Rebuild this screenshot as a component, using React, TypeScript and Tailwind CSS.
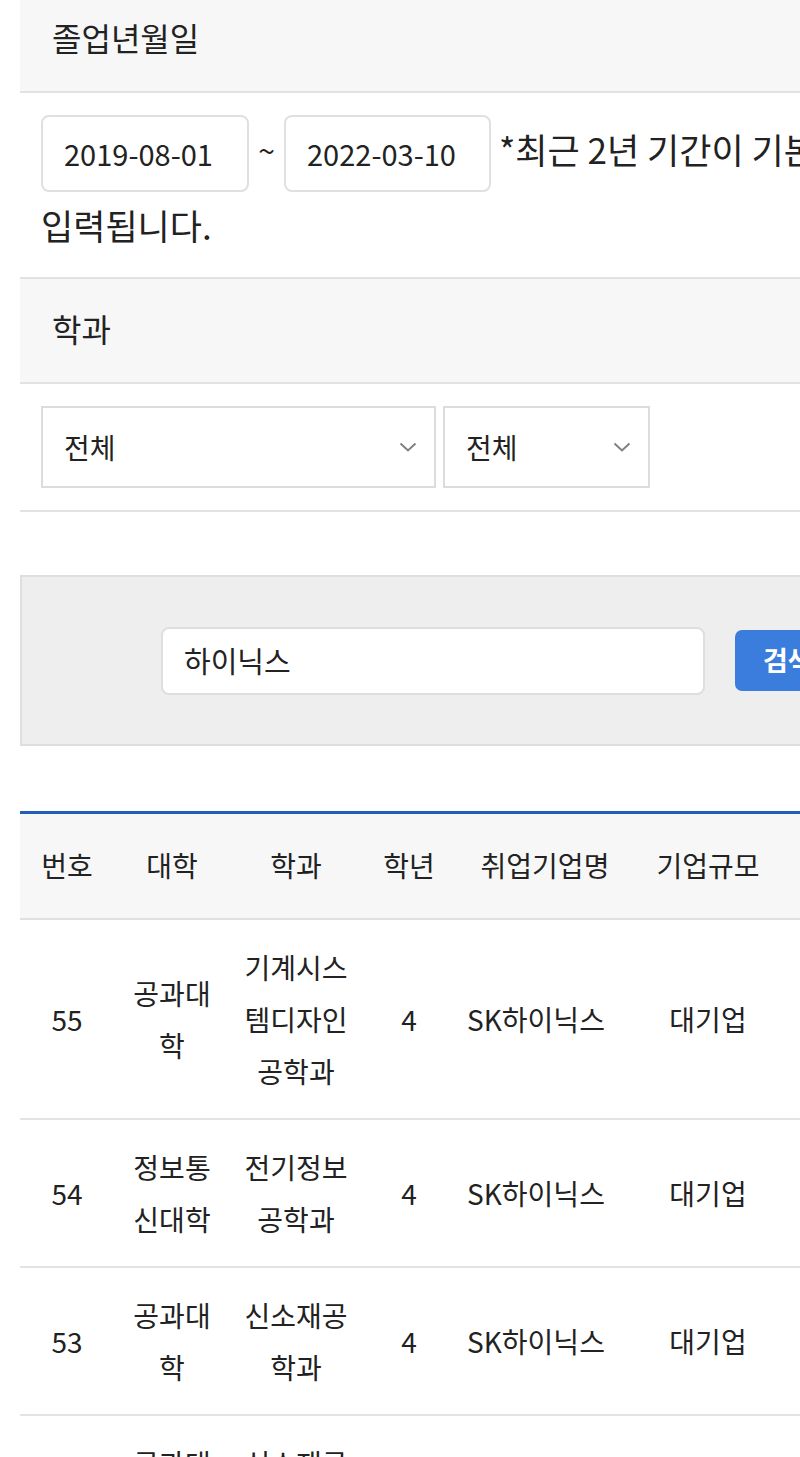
const rows = [
  { no: 55, college: "공과대학", dept: "기계시스템디자인공학과", grade: 4, company: "SK하이닉스", size: "대기업" },
  { no: 54, college: "정보통신대학", dept: "전기정보공학과", grade: 4, company: "SK하이닉스", size: "대기업" },
  { no: 53, college: "공과대학", dept: "신소재공학과", grade: 4, company: "SK하이닉스", size: "대기업" },
  { no: 52, college: "공과대학", dept: "신소재공학과", grade: 4, company: "SK하이닉스", size: "대기업" },
];

const cols = ["w-[94px]", "w-[116px]", "w-[132px]", "w-[94px]", "w-[178px]", "w-[148px]", "w-[120px]"];

function Chevron() {
  return (
    <svg width="18" height="10" viewBox="0 0 18 10" className="shrink-0">
      <polyline points="1.5,1.5 9,8.5 16.5,1.5" fill="none" stroke="#808080" strokeWidth="2" />
    </svg>
  );
}

function Select({ width }: { width: string }) {
  return (
    <div className={`${width} h-[82px] border-2 border-[#dcdcdc] bg-white flex items-center justify-between pl-[21px] pr-[17px]`}>
      <span className="text-[28px]">전체</span>
      <Chevron />
    </div>
  );
}

export default function App() {
  return (
    <div
      className="w-[800px] h-[1457px] overflow-hidden bg-white text-[#222]"
      style={{ fontFamily: '"Noto Sans CJK KR", "Noto Sans", sans-serif' }}
    >
      <div className="ml-[20px] w-[900px]">
        {/* 졸업년월일 */}
        <div className="h-[93px] bg-[#f7f7f7] border-b-2 border-[#e2e2e2] flex items-center pl-[32px] pb-[18px]">
          <span className="text-[32px]">졸업년월일</span>
        </div>
        <div className="pl-[21px] pt-[22px] pb-[29px] border-b-2 border-[#e2e2e2]">
          <div className="flex items-center">
            <div className="w-[208px] h-[77px] rounded-[8px] border-2 border-[#e0e0e0] flex items-center pl-[21px] text-[29px]">
              2019-08-01
            </div>
            <div className="w-[35px] text-center text-[30px] -mt-[8px]">~</div>
            <div className="w-[207px] h-[77px] rounded-[8px] border-2 border-[#e0e0e0] flex items-center pl-[21px] text-[29px]">
              2022-03-10
            </div>
            <span className="ml-[8px] text-[35px] whitespace-nowrap -mt-[8px]">*최근 2년 기간이 기본으로</span>
          </div>
          <div className="mt-[10px] text-[35px] leading-[46px]">입력됩니다.</div>
        </div>

        {/* 학과 */}
        <div className="h-[105px] bg-[#f7f7f7] border-b-2 border-[#e2e2e2] flex items-center pl-[32px] pb-[6px]">
          <span className="text-[32px]">학과</span>
        </div>
        <div className="pl-[21px] pt-[22px] pb-[22px] border-b-2 border-[#e2e2e2] flex gap-[7px]">
          <Select width="w-[395px]" />
          <Select width="w-[207px]" />
        </div>

        {/* 검색 */}
        <div className="mt-[63px] h-[171px] bg-[#eeeeee] border-2 border-[#dedede] flex items-center pl-[139px]">
          <div className="w-[544px] h-[68px] rounded-[8px] border-2 border-[#dedede] bg-white flex items-center pl-[21px] text-[29px]">
            하이닉스
          </div>
          <button className="ml-[30px] h-[61px] px-[28px] rounded-[7px] bg-[#3b7ddd] text-white text-[27px] font-semibold">
            검색
          </button>
        </div>

        {/* 목록 */}
        <div className="mt-[65px] border-t-[3px] border-[#1f5fb5]">
          <div className="flex h-[106px] bg-[#f7f7f7] border-b-2 border-[#e0e0e0] text-[28px]">
            {["번호", "대학", "학과", "학년", "취업기업명", "기업규모", "비고"].map((h, i) => (
              <div key={h} className={`${cols[i]} flex items-center justify-center pb-[2px] whitespace-nowrap`}>
                {h}
              </div>
            ))}
          </div>
          {rows.map((r) => (
            <div key={r.no} className="flex border-b-2 border-[#e3e3e3] text-[28px] leading-[52px]">
              {[r.no, r.college, r.dept, r.grade, r.company, r.size, ""].map((v, i) => (
                <div
                  key={i}
                  className={`${cols[i]} py-[21px] px-[10px] flex items-center justify-center text-center break-all ${i === 4 ? "pr-[28px]" : ""}`}
                >
                  {v}
                </div>
              ))}
            </div>
          ))}
        </div>
      </div>
    </div>
  );
}
